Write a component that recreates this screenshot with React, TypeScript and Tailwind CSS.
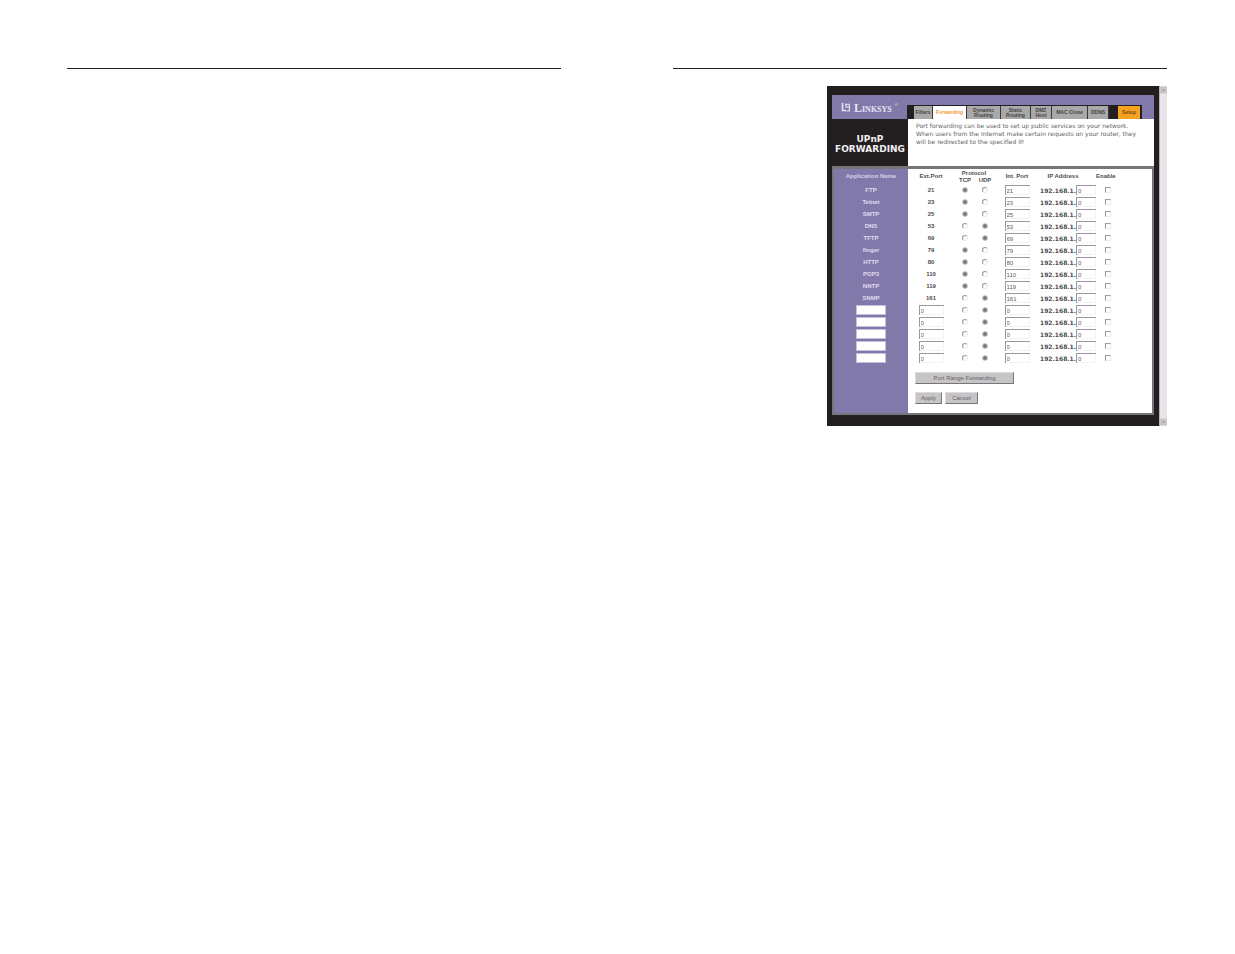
import React from "react";

type Service = { name: string; ext: string; proto: "tcp" | "udp"; int: string };

const services: Service[] = [
  { name: "FTP", ext: "21", proto: "tcp", int: "21" },
  { name: "Telnet", ext: "23", proto: "tcp", int: "23" },
  { name: "SMTP", ext: "25", proto: "tcp", int: "25" },
  { name: "DNS", ext: "53", proto: "udp", int: "53" },
  { name: "TFTP", ext: "69", proto: "udp", int: "69" },
  { name: "finger", ext: "79", proto: "tcp", int: "79" },
  { name: "HTTP", ext: "80", proto: "tcp", int: "80" },
  { name: "POP3", ext: "110", proto: "tcp", int: "110" },
  { name: "NNTP", ext: "119", proto: "tcp", int: "119" },
  { name: "SNMP", ext: "161", proto: "udp", int: "161" },
  ...Array.from({ length: 5 }, (): Service => ({ name: "", ext: "", proto: "udp", int: "0" })),
];

const tabs = [
  { label: "Filters", style: "w-[19px] bg-[#aaa9aa] text-[#454244]" },
  { label: "Forwarding", style: "w-[34px] bg-white text-[#f39a2e]" },
  { label: "Dynamic Routing", style: "w-[34px] bg-[#aaa9aa] text-[#454244]" },
  { label: "Static Routing", style: "w-[30px] bg-[#aaa9aa] text-[#454244]" },
  { label: "DMZ Host", style: "w-[21px] bg-[#aaa9aa] text-[#454244]" },
  { label: "MAC Clone", style: "w-[36px] bg-[#aaa9aa] text-[#454244]" },
  { label: "DDNS", style: "w-[21px] bg-[#aaa9aa] text-[#454244]" },
];

const fieldStyle =
  "block h-[10px] border-t border-l border-[#9a989a] bg-white pl-px text-[6px] leading-[8px] font-normal text-[#5c595b] shadow-[inset_-1px_-1px_0_#f3f2f3] outline-none";
const radioStyle =
  "mx-auto block size-[6px] appearance-none rounded-full border border-t-[#9a989a] border-l-[#9a989a] border-r-[#eceaec] border-b-[#eceaec] bg-white checked:border-[#d0ced0] checked:bg-[#7b787b]";
const buttonStyle =
  "h-[12px] border border-t-[#dddbdd] border-l-[#dddbdd] border-r-[#777577] border-b-[#777577] bg-[#c6c4c6] text-center text-[6px] leading-[9px] text-[#656265]";

function Logo() {
  return (
    <div className="flex h-[23px] w-[75px] shrink-0 items-center gap-[3px] pl-[9px] text-[#e6e3f2]">
      <svg viewBox="0 0 10 9" className="h-[9px] w-[10px] shrink-0" fill="none" stroke="currentColor" aria-hidden="true">
        <path d="M1.5 0v7.5H5" strokeWidth="1.6" />
        <path d="M4 1.2h4.6M4.2 4h4.2M8.4 1v7H5.2M5 1v3" strokeWidth="1.1" />
      </svg>
      <span className="font-['Liberation_Serif',serif] text-[12px] leading-[12px] font-bold [font-variant:small-caps]">
        Linksys
      </span>
      <span className="self-start pt-[7px] text-[4px] leading-[4px]">®</span>
    </div>
  );
}

function ServiceRow({ service, index }: { service: Service; index: number }) {
  const custom = service.name === "";
  const label = custom ? `Custom ${index - 9}` : service.name;
  return (
    <tr className="h-[12px]">
      <td className="bg-[#8279ab] text-[#e0dcee]">
        {custom ? (
          <input aria-label={`${label} name`} className="mx-auto block h-[10px] w-[30px] border border-[#c4bfda] bg-white text-[6px] text-[#555254] outline-none" />
        ) : (
          service.name
        )}
      </td>
      <td>
        {custom ? (
          <input aria-label={`${label} external port`} defaultValue="0" className={`${fieldStyle} mx-auto w-[25px]`} />
        ) : (
          service.ext
        )}
      </td>
      <td>
        <input type="radio" name={`proto${index}`} aria-label={`${label} TCP`} defaultChecked={service.proto === "tcp"} className={radioStyle} />
      </td>
      <td>
        <input type="radio" name={`proto${index}`} aria-label={`${label} UDP`} defaultChecked={service.proto === "udp"} className={radioStyle} />
      </td>
      <td>
        <input aria-label={`${label} internal port`} defaultValue={service.int} className={`${fieldStyle} mx-auto w-[25px]`} />
      </td>
      <td>
        <div className="flex items-center">
          <span className="w-[36px] shrink-0 text-left font-['DejaVu_Sans',sans-serif]">192.168.1.</span>
          <input aria-label={`${label} address`} defaultValue="0" className={`${fieldStyle} w-[20px]`} />
        </div>
      </td>
      <td>
        <input type="checkbox" aria-label={`${label} enable`} className="mx-auto block size-[6px] appearance-none border border-t-[#9a989a] border-l-[#9a989a] border-r-[#eceaec] border-b-[#eceaec] bg-white checked:bg-[#686568]" />
      </td>
      <td />
    </tr>
  );
}

function RouterWindow() {
  return (
    <div className="flex w-[340px] bg-[#231f20] font-['Liberation_Sans',Arial,sans-serif]">
      <div className="min-w-0 flex-1 px-[5px] pt-[9px] pb-[11px]">
        <header className="flex items-end bg-[#8279ab] pt-px">
          <Logo />
          <nav className="flex h-[14px] w-[235px] bg-[#231f20] pt-px pl-[7px] text-[5px] leading-[5px] font-bold">
            {tabs.map((tab) => (
              <a key={tab.label} href="#" className={`flex items-center justify-center border-r border-[#3b373b] text-center ${tab.style}`}>
                {tab.label}
              </a>
            ))}
            <a href="#" className="ml-[9px] flex w-[22px] items-center justify-center bg-[#f5a21f] text-[#7a4a10]">
              Setup
            </a>
          </nav>
        </header>
        <section className="flex h-[47px]">
          <h1 className="w-[76px] shrink-0 pt-[15px] text-center font-['DejaVu_Sans',sans-serif] text-[9px] leading-[10px] font-bold text-[#f2f0f2]">
            UPnP
            <br />
            FORWARDING
          </h1>
          <p className="flex-1 bg-white pt-[3px] pl-[8px] font-['DejaVu_Sans',sans-serif] text-[6px] leading-[8px] whitespace-nowrap text-[#656265]">
            Port forwarding can be used to set up public services on your network.
            <br />
            When users from the Internet make certain requests on your router, they
            <br />
            will be redirected to the specified IP.
          </p>
        </section>
        <form className="border-2 border-t-[3px] border-[#77747c] bg-white" onSubmit={(e) => e.preventDefault()}>
          <table className="w-full table-fixed border-collapse text-center text-[6px] leading-[7px] font-bold text-[#4f4c4e]">
            <colgroup>
              <col className="w-[74px]" />
              <col className="w-[46px]" />
              <col className="w-[22px]" />
              <col className="w-[18px]" />
              <col className="w-[46px]" />
              <col className="w-[56px]" />
              <col className="w-[24px]" />
              <col />
            </colgroup>
            <thead>
              <tr className="h-[8px]">
                <th rowSpan={2} className="bg-[#8279ab] text-[#d5d1e8]">Application Name</th>
                <th rowSpan={2}>Ext.Port</th>
                <th colSpan={2}>Protocol</th>
                <th rowSpan={2}>Int. Port</th>
                <th rowSpan={2} className="pr-[10px]">IP Address</th>
                <th rowSpan={2} className="pr-[6px] whitespace-nowrap">Enable</th>
                <th rowSpan={2} />
              </tr>
              <tr className="h-[7px]">
                <th>TCP</th>
                <th>UDP</th>
              </tr>
            </thead>
            <tbody>
              {services.map((service, i) => (
                <ServiceRow key={i} service={service} index={i} />
              ))}
            </tbody>
          </table>
          <div className="flex">
            <div className="w-[74px] shrink-0 bg-[#8279ab]" />
            <div className="flex flex-col gap-[8px] pt-[8px] pb-[9px] pl-[7px]">
              <button type="button" className={`${buttonStyle} w-[99px]`}>Port Range Forwarding</button>
              <div className="flex gap-[3px]">
                <button type="submit" className={`${buttonStyle} w-[27px]`}>Apply</button>
                <button type="reset" className={`${buttonStyle} w-[33px]`}>Cancel</button>
              </div>
            </div>
          </div>
        </form>
      </div>
      <div className="flex w-[8px] flex-col justify-between border-l border-[#b9b3b7] bg-[#e9e4e7]" aria-hidden="true">
        <svg viewBox="0 0 8 8" className="h-[8px] w-[7px]">
          <path d="M0 0h8v8H0z" fill="#cbc6c9" />
          <path d="M2 5l2-2 2 2z" fill="#979397" />
        </svg>
        <svg viewBox="0 0 8 8" className="h-[8px] w-[7px]">
          <path d="M0 0h8v8H0z" fill="#cbc6c9" />
          <path d="M2 3l2 2 2-2z" fill="#979397" />
        </svg>
      </div>
    </div>
  );
}

export default function App() {
  return (
    <main className="grid min-h-screen grid-cols-2 gap-[112px] bg-white pt-[68px] pr-[68px] pl-[67px]">
      <section className="border-t border-[#231f20]" />
      <section className="flex flex-col items-end border-t border-[#231f20] pt-[17px]">
        <RouterWindow />
      </section>
    </main>
  );
}
